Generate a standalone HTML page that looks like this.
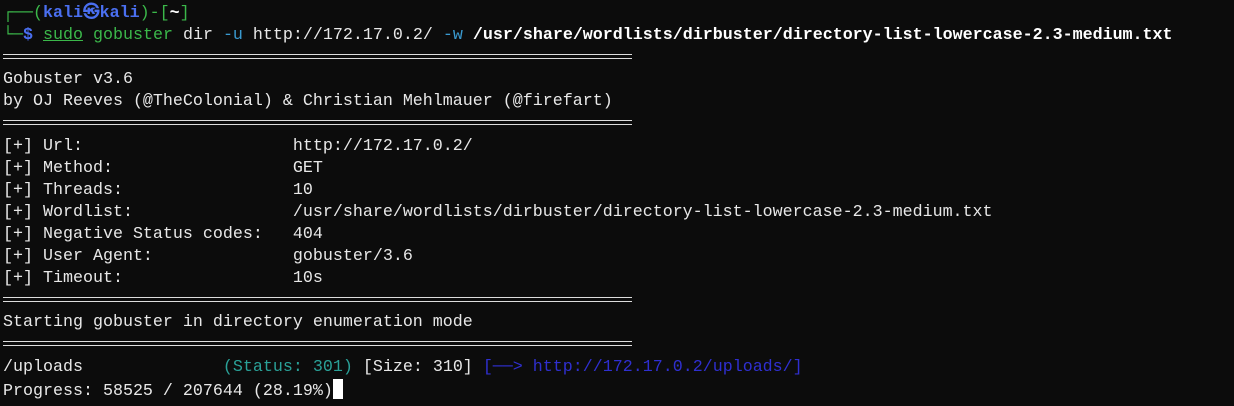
<!DOCTYPE html>
<html><head><meta charset="utf-8"><style>
html,body{margin:0;padding:0;background:#0c0c0c;width:1234px;height:406px;overflow:hidden}
pre{margin:0;padding:3px 0 0 3px;font-family:"Liberation Mono","DejaVu Sans Mono",monospace;font-size:16.67px;line-height:22.1px;color:#e8e8e8;white-space:pre}
.g{color:#3bb84a}.b{color:#4a6ff0;font-weight:bold}.w{color:#fff;font-weight:bold}
.c{color:#2aa198}.d{color:#2f2fd0}.t{color:#3a9ad0}
.sep{display:block;height:22.1px;width:629px;position:relative}
.sep:after{content:"";position:absolute;left:0;right:0;top:7px;height:3px;border-top:1px solid #ddd;border-bottom:1px solid #ddd}
.cur{background:#fff;display:inline-block;width:10px;height:20px;vertical-align:-4px}
</style></head><body><pre><span class="g">┌──(</span><span class="b">kali㉿kali</span><span class="g">)-[</span><span class="w">~</span><span class="g">]</span>
<span class="g">└─</span><span class="b">$</span> <span class="g" style="text-decoration:underline">sudo</span> <span class="g">gobuster</span> dir <span class="t">-u</span> http://172.17.0.2/ <span class="t">-w</span> <span class="w">/usr/share/wordlists/dirbuster/directory-list-lowercase-2.3-medium.txt</span>
<span class="sep"></span>Gobuster v3.6
by OJ Reeves (@TheColonial) &amp; Christian Mehlmauer (@firefart)
<span class="sep"></span>[+] Url:                     http://172.17.0.2/
[+] Method:                  GET
[+] Threads:                 10
[+] Wordlist:                /usr/share/wordlists/dirbuster/directory-list-lowercase-2.3-medium.txt
[+] Negative Status codes:   404
[+] User Agent:              gobuster/3.6
[+] Timeout:                 10s
<span class="sep"></span>Starting gobuster in directory enumeration mode
<span class="sep"></span>/uploads              <span class="c">(Status: 301)</span> [Size: 310] <span class="d">[──&gt; http://172.17.0.2/uploads/]</span>
Progress: 58525 / 207644 (28.19%)<span class="cur"></span></pre></body></html>
